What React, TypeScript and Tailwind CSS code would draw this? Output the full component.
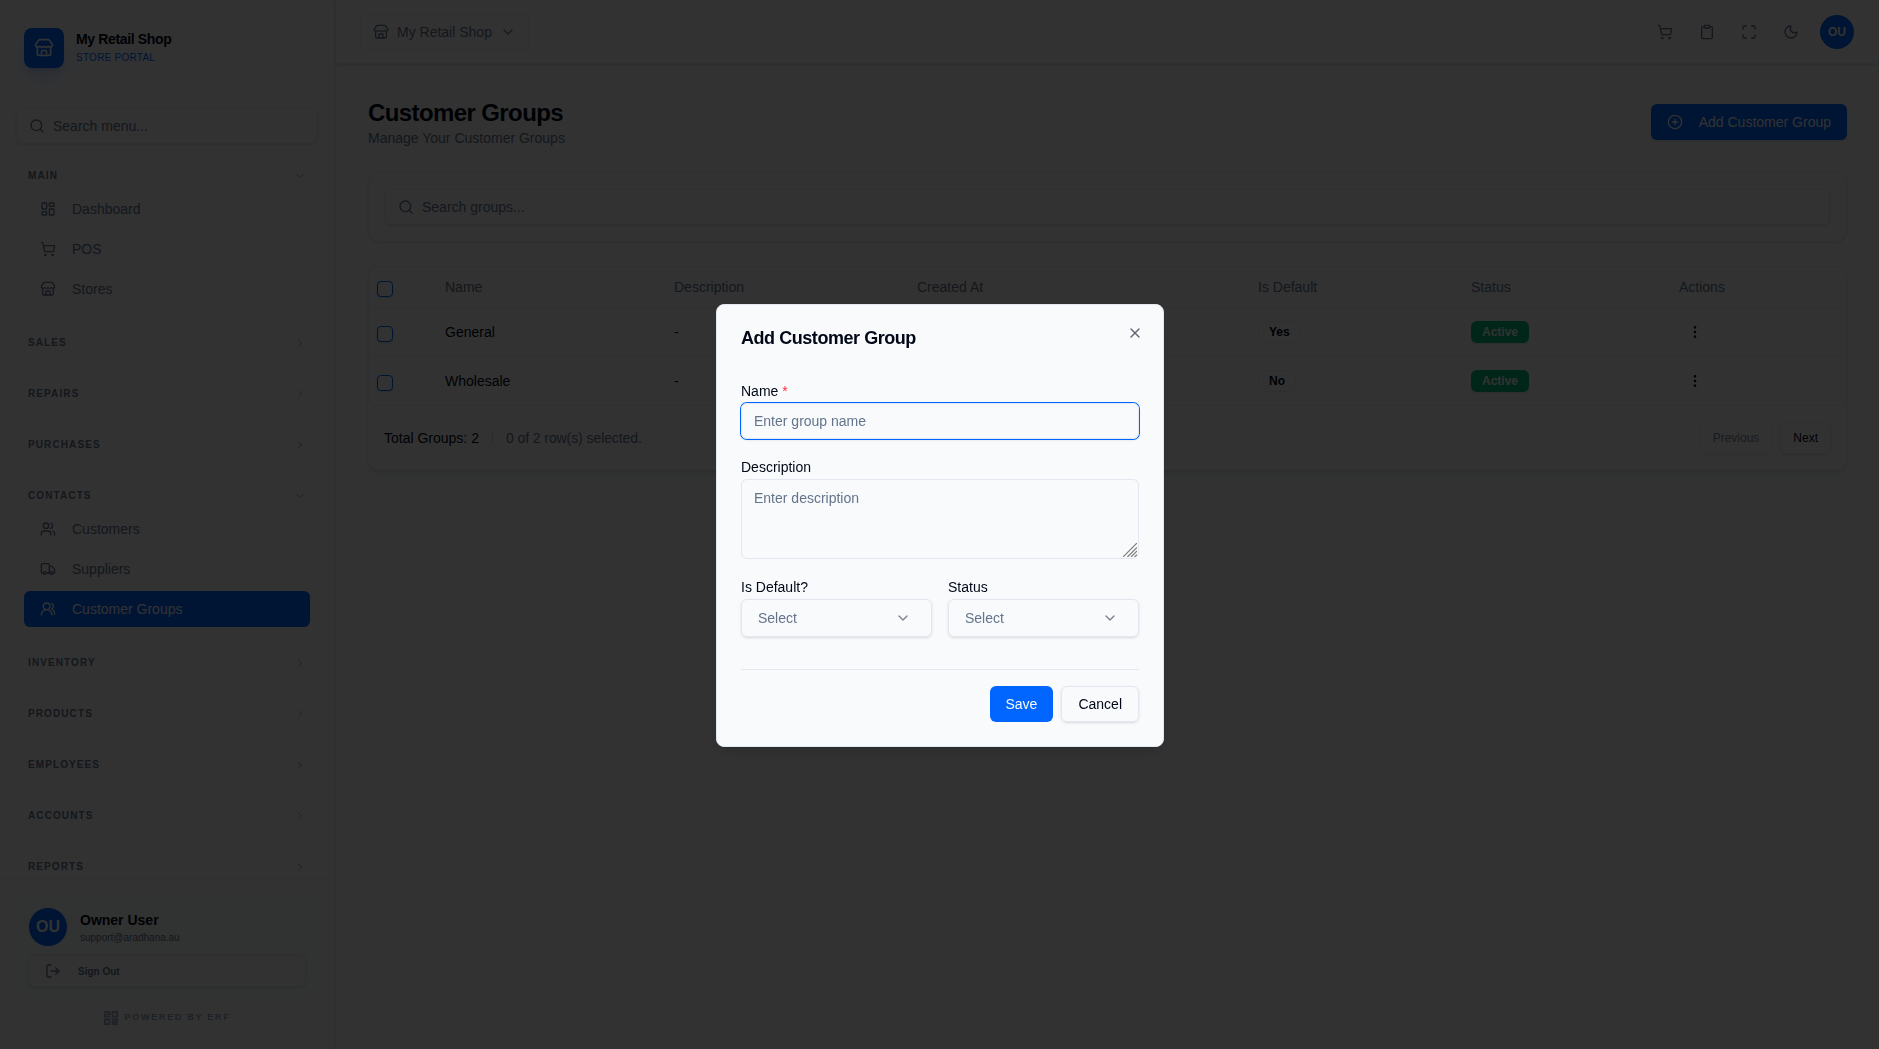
import React from 'react';
import {
    ChevronDown,
    ChevronRight,
    CirclePlus,
    Clipboard,
    EllipsisVertical,
    LayoutDashboard,
    LogOut,
    Maximize,
    Moon,
    Search,
    ShoppingCart,
    Store,
    Truck,
    Users,
    UsersRound,
    X,
    type LucideIcon
} from 'lucide-react';

interface NavItem {
    label: string;
    icon: LucideIcon;
    active?: boolean;
}

interface NavSection {
    title: string;
    items?: NavItem[];
}

interface CustomerGroup {
    name: string;
    description: string;
    createdAt: string;
    isDefault: boolean;
    status: string;
}

const sections: NavSection[] = [
    {
        title: 'Main',
        items: [
            { label: 'Dashboard', icon: LayoutDashboard },
            { label: 'POS', icon: ShoppingCart },
            { label: 'Stores', icon: Store }
        ]
    },
    { title: 'Sales' },
    { title: 'Repairs' },
    { title: 'Purchases' },
    {
        title: 'Contacts',
        items: [
            { label: 'Customers', icon: Users },
            { label: 'Suppliers', icon: Truck },
            { label: 'Customer Groups', icon: UsersRound, active: true }
        ]
    },
    { title: 'Inventory' },
    { title: 'Products' },
    { title: 'Employees' },
    { title: 'Accounts' },
    { title: 'Reports' }
];

const groups: CustomerGroup[] = [
    { name: 'General', description: '-', createdAt: '', isDefault: true, status: 'Active' },
    { name: 'Wholesale', description: '-', createdAt: '', isDefault: false, status: 'Active' }
];

// Logo of the platform, four blocky shapes
const PoweredLogo = () => (
    <svg width="14" height="14" viewBox="0 0 14 14" fill="none" stroke="#94a3b8" strokeWidth="1.8">
        <path d="M0 .9h5.4v2.4H.9v2.4h5.4" />
        <path d="M8.5 .9h4.6v4.7H8.5z" />
        <path d="M.9 8.5h4.6v4.6H.9z" />
        <path d="M7.7 8.5h5.4v2.3H8.6v2.3H14" />
    </svg>
);

// Resize grip in the corner of the textarea
const ResizeGrip = () => (
    <svg className="absolute bottom-0.5 right-0.5" width="14" height="14" viewBox="0 0 14 14" stroke="#7b7b7b" strokeWidth="1.2">
        <path d="M0 14 14 0M4.4 14 14 4.4M8 14l6-6M11.6 14l2.4-2.4" />
    </svg>
);

const SidebarSection = ({ section }: { section: NavSection }) => (
    <div>
        <div className="flex h-[31px] items-center justify-between px-1">
            <span className="text-[10px] font-bold uppercase tracking-[0.11em] text-[#64748b]">{section.title}</span>
            {section.items
                ? <ChevronDown className="size-3 text-[#94a3b8]" />
                : <ChevronRight className="size-3 text-[#94a3b8]" />}
        </div>
        {section.items && (
            <div className="space-y-1">
                {section.items.map(item => (
                    <a
                        key={item.label}
                        className={`flex h-9 items-center gap-4 rounded-md px-4 text-sm ${item.active
                            ? 'bg-[#0066ff] text-slate-50'
                            : 'text-[#64748b]'
                            }`}
                    >
                        <item.icon className="size-4" />
                        {item.label}
                    </a>
                ))}
            </div>
        )}
    </div>
);

const Sidebar = () => (
    <aside className="mr-px flex h-full w-[335px] shrink-0 flex-col border-r border-slate-200 bg-slate-50 shadow-sm">
        <div className="flex items-center gap-3 px-6 pt-7">
            <div className="flex size-10 items-center justify-center rounded-lg bg-[#0066ff] shadow-lg shadow-[#0066ff]/20">
                <Store className="size-5 text-slate-50" />
            </div>
            <div className="pt-px">
                <div className="text-sm font-bold leading-4 tracking-tight">My Retail Shop</div>
                <div className="mt-[3px] text-[10px] uppercase leading-4 tracking-wide text-[#0066ff]">Store Portal</div>
            </div>
        </div>

        <div className="mx-4 mt-10 flex h-9 shrink-0 items-center gap-2 rounded-md border border-slate-200 px-3 text-sm text-[#64748b] shadow-sm">
            <Search className="size-4" />
            Search menu...
        </div>

        <nav className="mt-4 min-h-0 flex-1 space-y-5 overflow-hidden px-6">
            {sections.map(section => <SidebarSection key={section.title} section={section} />)}
        </nav>

        <div className="h-[171px] shrink-0 border-t border-slate-200 p-4">
            <div className="h-[102px] rounded-xl bg-slate-100/40 p-3">
                <div className="flex items-center gap-3">
                    <div className="flex size-10 items-center justify-center rounded-full border border-slate-100 bg-[#0066ff] font-bold text-slate-50">OU</div>
                    <div>
                        <div className="text-sm font-bold leading-5">Owner User</div>
                        <div className="text-[10px] leading-[15px] text-[#64748b]">support@aradhana.au</div>
                    </div>
                </div>
                <div className="mt-2 flex h-8 items-center gap-[17px] rounded-md border border-slate-200 bg-slate-50 px-4 text-[10px] font-bold text-[#64748b] shadow-sm">
                    <LogOut className="size-4" />
                    Sign Out
                </div>
            </div>
            <div className="mt-[13px] flex items-center justify-center gap-[7px]">
                <PoweredLogo />
                <span className="text-[9px] font-bold uppercase leading-[15px] tracking-[0.19em] text-[#94a3b8]">Powered by ERF</span>
            </div>
        </div>
    </aside>
);

const TopBar = () => (
    <header className="flex h-16 shrink-0 items-center justify-between border-b border-slate-200 bg-slate-50 px-6 shadow-sm">
        <button className="flex h-9 items-center gap-2 rounded-md border border-slate-200 px-3 text-sm text-[#64748b]">
            <Store className="size-4" />
            My Retail Shop
            <ChevronDown className="size-4" />
        </button>
        <div className="flex items-center pr-px text-[#64748b]">
            <div className="mr-[21px] flex gap-[26px]">
                <ShoppingCart className="size-4" />
                <Clipboard className="size-4" />
                <Maximize className="size-4" />
                <Moon className="size-4" />
            </div>
            <div className="flex size-[34px] items-center justify-center rounded-full bg-[#0066ff] text-xs font-bold text-slate-50">OU</div>
        </div>
    </header>
);

const Checkbox = () => (
    <div className="relative top-0.5 size-4 rounded-sm border border-[#0066ff] shadow-sm" />
);

const GroupsTable = () => (
    <div className="h-[204px] rounded-xl shadow-md">
        <div className="overflow-hidden rounded-md border border-slate-200">
            <table className="w-full table-fixed text-left text-sm">
                <colgroup>
                    <col className="w-[68px]" />
                    <col className="w-[229px]" />
                    <col className="w-[243px]" />
                    <col className="w-[341px]" />
                    <col className="w-[213px]" />
                    <col className="w-[208px]" />
                    <col />
                </colgroup>
                <thead>
                    <tr className="h-10 border-b border-slate-200 text-[#64748b]">
                        <th className="px-2"><Checkbox /></th>
                        <th className="px-2 font-normal">Name</th>
                        <th className="px-2 font-normal">Description</th>
                        <th className="px-2 font-normal">Created At</th>
                        <th className="px-2 font-normal">Is Default</th>
                        <th className="px-2 font-normal">Status</th>
                        <th className="px-2 font-normal">Actions</th>
                    </tr>
                </thead>
                <tbody>
                    {groups.map(group => (
                        <tr key={group.name} className="h-[49px] border-b border-slate-200 last:border-0">
                            <td className="px-2"><Checkbox /></td>
                            <td className="px-2">{group.name}</td>
                            <td className="px-2">{group.description}</td>
                            <td className="px-2">{group.createdAt}</td>
                            <td className="px-2">
                                <span className="inline-flex h-[22px] items-center rounded-md border border-slate-200 px-2.5 text-xs font-bold">
                                    {group.isDefault ? 'Yes' : 'No'}
                                </span>
                            </td>
                            <td className="px-2">
                                <span className="inline-flex h-[22px] items-center rounded-md bg-emerald-500 px-[11px] text-xs font-bold text-slate-50 shadow-sm">
                                    {group.status}
                                </span>
                            </td>
                            <td className="px-4"><EllipsisVertical className="size-4" /></td>
                        </tr>
                    ))}
                </tbody>
            </table>
        </div>
        <div className="flex h-16 items-center justify-between px-4 text-sm">
            <div className="flex items-center gap-[13px]">
                <span>Total Groups: 2</span>
                <span className="h-3.5 w-px bg-slate-300" />
                <span className="tracking-[-0.08px] text-[#64748b]">0 of 2 row(s) selected.</span>
            </div>
            <div className="flex gap-2 text-xs">
                <button className="h-8 rounded-md border border-slate-200 px-3 opacity-50 shadow-sm">Previous</button>
                <button className="h-8 rounded-md border border-slate-200 px-3 shadow-sm">Next</button>
            </div>
        </div>
    </div>
);

const SelectField = ({ label }: { label: string }) => (
    <div>
        <label className="block text-sm leading-6">{label}</label>
        <button className="flex h-[38px] w-full items-center justify-between rounded-md border border-slate-200 pl-4 pr-5 text-sm text-[#64748b] shadow-sm">
            Select
            <ChevronDown className="size-4 text-[#7c7f8b]" />
        </button>
    </div>
);

const AddGroupDialog = () => (
    <div className="fixed inset-0 flex items-start justify-center bg-black/80 pt-[304px]">
        <div className="relative ml-px h-[443px] w-[448px] rounded-lg border border-slate-200 bg-slate-50 px-6 shadow-lg">
            <X className="absolute right-5 top-[19.5px] size-4 text-[#62656f]" />
            <h2 className="mt-6 text-lg font-bold leading-[18px] tracking-tight">Add Customer Group</h2>

            <div className="mt-8">
                <label className="block text-sm leading-6">
                    Name <span className="text-red-500">*</span>
                </label>
                <input
                    className="h-9 w-full rounded-md border border-slate-200 px-3 text-sm shadow-sm ring-1 ring-[#0066ff] outline-none placeholder:text-[#64748b]"
                    placeholder="Enter group name"
                />
            </div>
            <div className="mt-4">
                <label className="block text-sm leading-6">Description</label>
                <div className="relative">
                    <textarea
                        className="block h-20 w-full resize-none rounded-md border border-slate-200 px-3 py-2 text-sm outline-none placeholder:text-[#64748b]"
                        placeholder="Enter description"
                    />
                    <ResizeGrip />
                </div>
            </div>
            <div className="mt-4 grid grid-cols-2 gap-4">
                <SelectField label="Is Default?" />
                <SelectField label="Status" />
            </div>
            <div className="mt-8 flex justify-end gap-2 border-t border-slate-200 pt-4 text-sm">
                <button className="h-9 rounded-md bg-[#0066ff] pl-[15px] pr-4 text-slate-50">Save</button>
                <button className="h-9 rounded-md border border-slate-200 px-4 shadow-sm">Cancel</button>
            </div>
        </div>
    </div>
);

export default function App() {
    return (
        <div className="flex h-screen w-screen overflow-hidden bg-slate-50 font-['Liberation_Sans',Arial,sans-serif] text-[#020817]">
            <Sidebar />
            <div className="flex min-w-0 flex-1 flex-col">
                <TopBar />
                <main className="flex-1 px-8 pt-8">
                    <div className="flex items-start justify-between">
                        <div>
                            <h1 className="pt-px text-2xl font-bold leading-8 tracking-tight">Customer Groups</h1>
                            <p className="text-sm leading-[18px] text-[#64748b]">Manage Your Customer Groups</p>
                        </div>
                        <button className="mt-2 flex h-9 items-center gap-4 rounded-md bg-[#0066ff] px-4 text-sm text-slate-50 shadow-sm">
                            <CirclePlus className="size-4" />
                            Add Customer Group
                        </button>
                    </div>
                    <div className="mb-6 mt-[25px] rounded-xl border border-slate-200 p-4 shadow-sm">
                        <div className="flex h-9 items-center gap-2 rounded-md border border-slate-200 px-3 text-sm text-[#64748b] shadow-sm">
                            <Search className="size-4" />
                            Search groups...
                        </div>
                    </div>
                    <GroupsTable />
                </main>
            </div>
            <AddGroupDialog />
        </div>
    );
}
